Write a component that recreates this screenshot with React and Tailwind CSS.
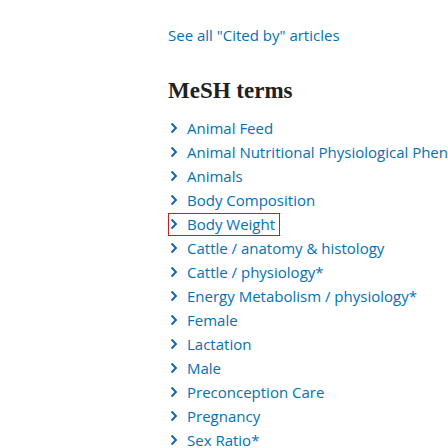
const TERMS = [
  'Animal Feed',
  'Animal Nutritional Physiological Phenomena',
  'Animals',
  'Body Composition',
  'Body Weight',
  'Cattle / anatomy & histology',
  'Cattle / physiology*',
  'Energy Metabolism / physiology*',
  'Female',
  'Lactation',
  'Male',
  'Preconception Care',
  'Pregnancy',
  'Sex Ratio*',
];

function Chevron() {
  return (
    <svg width="8" height="12" viewBox="0 0 8 12" className="shrink-0">
      <path d="M1.5 1.5 L6 6 L1.5 10.5" fill="none" stroke="#0b5fa5" strokeWidth="1.8" />
    </svg>
  );
}

export default function App() {
  return (
    <div className="w-[448px] h-[448px] overflow-hidden bg-white pl-[168px] pt-[24px] font-['Open_Sans',sans-serif] text-[#0071bc]">
      <a className="block text-[15px] leading-[22px]">See all "Cited by" articles</a>

      <h2 className="mt-[30px] font-['Liberation_Serif',serif] font-bold text-[23px] leading-[30px] text-[#212121]">
        MeSH terms
      </h2>

      <ul className="mt-[10px] whitespace-nowrap">
        {TERMS.map((t) => (
          <li key={t} className="h-[24px] flex items-center">
            <span
              className={`flex items-center gap-[9px] h-[23px] pl-[2px] pr-[5px] ${
                t === 'Body Weight' ? 'outline outline-1 outline-[#e5121b] -outline-offset-1' : ''
              }`}
            >
              <Chevron />
              <span className="text-[15px]">{t}</span>
            </span>
          </li>
        ))}
      </ul>
    </div>
  );
}
